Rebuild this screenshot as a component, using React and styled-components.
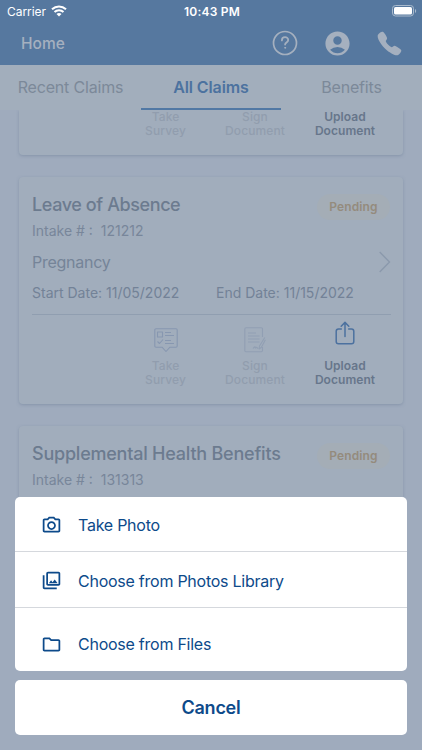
import styled, { createGlobalStyle } from 'styled-components';
import { MdAccountCircle, MdOutlinePhotoCamera, MdOutlinePhotoLibrary, MdOutlineFolder } from 'react-icons/md'
import { IoCall } from 'react-icons/io5'

const GlobalStyle = createGlobalStyle`
    * { box-sizing : border-box; }
    body {
        margin : 0;
        font-family : Inter, 'Liberation Sans', sans-serif;
    }
    svg { display : block; }
`

const Screen = styled.div`
    position : relative;
    width : 422px;
    height : 750px;
    overflow : hidden;
    display : flex;
    flex-direction : column;
    background : #9fabbd;
`

const TopBar = styled.header`
    flex : none;
    height : 65px;
    background : #56789f;
`

const StatusBar = styled.div`
    display : grid;
    grid-template-columns : 1fr auto 1fr;
    align-items : center;
    height : 22px;
    padding : 0 5px 0 7px;
    color : #fff;
    font-size : 12px;
`

const Carrier = styled.div`
    display : flex;
    align-items : center;
    gap : 5px;
    letter-spacing : -0.05px;
`

const Clock = styled.div`
    font-weight : 600;
    font-size : 12px;
    letter-spacing : 0.2px;
`

const Battery = styled.div`
    justify-self : end;
`

const NavBar = styled.div`
    display : flex;
    align-items : center;
    height : 42px;
    padding : 0 19px 0 21px;
    color : #a5b0bf;
`

const HomeLink = styled.div`
    flex : 1;
    font-size : 15.5px;
    font-weight : 500;
`

const NavIcons = styled.div`
    display : flex;
    align-items : center;
    gap : 24.5px;
`

const Tabs = styled.nav`
    flex : none;
    display : grid;
    grid-template-columns : 141px 140px 141px;
    height : 45px;
    background : #a2aebc;
`

const Tab = styled.div`
    display : flex;
    align-items : center;
    justify-content : center;
    padding-top : 1px;
    border-bottom : 2px solid ${p => p.$active ? '#5178a4' : 'transparent'};
    color : ${p => p.$active ? '#4c729f' : '#7c8999'};
    font-size : 16px;
    font-weight : ${p => p.$active ? 600 : 400};
    letter-spacing : ${p => p.$active ? '-0.1px' : '-0.18px'};
`

const List = styled.main`
    flex : 1;
    display : flex;
    flex-direction : column;
    gap : 22px;
    padding : 0 19px;
    overflow : hidden;
`

const Card = styled.section`
    flex : none;
    height : ${p => p.$tail ? '45px' : '227px'};
    padding : ${p => p.$tail ? '0 13px 0 12px' : '17px 12px 0 13px'};
    border-radius : ${p => p.$tail ? '0 0 4px 4px' : '4px'};
    background : #a1adbc;
    box-shadow : 0 1px 3px rgba(110, 128, 153, 0.5);
`

const CardHead = styled.div`
    display : flex;
    justify-content : space-between;
    height : 27px;
`

const Title = styled.h2`
    margin : 0;
    line-height : 22px;
    font-size : 18px;
    font-weight : 500;
    color : #6c7b8f;
    letter-spacing : ${p => p.$spacing || '0'};
`

const Badge = styled.span`
    width : 73px;
    height : 26px;
    margin-right : 1px;
    border-radius : 13px;
    background : #a4adb6;
    color : #948b7d;
    font-size : 12px;
    font-weight : 600;
    letter-spacing : 0.1px;
    line-height : 26px;
    text-align : center;
`

const Intake = styled.div`
    height : 19px;
    line-height : 19px;
    font-size : 14px;
    color : #78869a;
    white-space : pre;
`

const Kind = styled.div`
    display : flex;
    align-items : center;
    justify-content : space-between;
    height : 44px;
    font-size : 16px;
    color : #758498;
    letter-spacing : -0.25px;
`

const Dates = styled.div`
    display : grid;
    grid-template-columns : 184px 1fr;
    height : 31px;
    border-bottom : 1px solid #909eb0;
    line-height : 18px;
    font-size : 14px;
    color : #738297;
`

const Actions = styled.div`
    display : grid;
    grid-template-columns : 89px 90px 90px;
    justify-content : end;
    padding-right : ${p => p.$inset ? '1px' : '0'};
`

const Action = styled.div`
    display : flex;
    flex-direction : column;
    align-items : center;
    color : ${p => p.$enabled ? '#67768b' : '#919dae'};
    font-size : 12px;
    font-weight : ${p => p.$enabled ? 600 : 500};
    line-height : 14px;
    text-align : center;
    letter-spacing : ${p => p.$enabled ? '0.05px' : '0.1px'};
`

const ActionIcon = styled.div`
    display : flex;
    align-items : center;
    height : 44px;
    padding-top : ${p => p.$up ? '0' : '6px'};
    padding-bottom : ${p => p.$up ? '7px' : '0'};
`

const Sheet = styled.div`
    position : absolute;
    left : 15px;
    right : 15px;
    top : 497px;
    display : flex;
    flex-direction : column;
    gap : 8.5px;
    color : #0d4a8a;
`

const Options = styled.div`
    border-radius : 5px;
    background : #fff;
`

const Option = styled.div`
    display : flex;
    align-items : center;
    gap : 16px;
    height : ${p => p.$height}px;
    padding : ${p => p.$pad || '2px'} 0 0 26px;
    border-bottom : ${p => p.$last ? 'none' : '1px solid #d5d8dd'};
    font-size : 16px;
    letter-spacing : -0.25px;
`

const Cancel = styled.div`
    height : 55px;
    border-radius : 5px;
    background : #fff;
    font-size : 18px;
    font-weight : 600;
    line-height : 55px;
    letter-spacing : -0.25px;
    text-align : center;
`

function WifiIcon() {
    return (
        <svg width="16" height="12" viewBox="0 0 16 12" fill="none" stroke="#fff" strokeWidth="2">
            <path d="M1 4.3C5 .5 11 .5 15 4.3" />
            <path d="M3.5 7C6 4.6 10 4.6 12.5 7" />
            <path d="M8 11.6 5.5 9C7 7.8 9 7.8 10.5 9Z" fill="#fff" stroke="none" />
        </svg>
    )
}

function BatteryIcon() {
    return (
        <svg width="25" height="12" viewBox="0 0 25 12">
            <rect x=".5" y=".5" width="21" height="10.5" rx="3" fill="none" stroke="#a9bacd" />
            <rect x="2" y="2" width="18" height="7.5" rx="1.6" fill="#fff" />
            <path d="M23 4v4c1.6-.6 1.6-3.4 0-4Z" fill="#a9bacd" />
        </svg>
    )
}

function HelpIcon() {
    return (
        <svg width="26" height="26" viewBox="0 0 26 26" fill="none" stroke="currentColor" strokeLinecap="round">
            <circle cx="13" cy="13" r="11.5" strokeWidth="1.7" />
            <path d="M9.9 10.4c0-4.200 6.300-4.200 6.300-.3 0 2.400-3.100 2.400-3.100 4.400" strokeWidth="1.800" />
            <circle cx="13.100" cy="17.800" r=".5" fill="currentColor" />
        </svg>
    )
}

function SurveyIcon() {
    return (
        <svg width="24" height="25" viewBox="0 0 24 25" fill="none" stroke="#8797b0" strokeWidth="1.1" strokeLinejoin="round">
            <path d="M2 .8h20q1.200 0 1.200 1.200v16q0 1.200-1.200 1.200h-6L12 23.500l-4-4.300H2Q.8 19.200 .8 18V2Q.8.8 2 .8Z" />
            <rect x="3.500" y="4" width="5" height="5" />
            <path d="M11 4.500h6M11 7.500h9M11 12.500h6M11 15.500h9M3.500 13.500l2 2 3.500-4" />
        </svg>
    )
}

function SignIcon() {
    return (
        <svg width="22" height="26" viewBox="0 0 22 26" fill="none" stroke="#919fb3" strokeWidth="1.1" strokeLinejoin="round">
            <path d="M18.500 10V2q0-1.200-1.200-1.200H2Q.8.8.8 2v21.500q0 1.200 1.200 1.200h15.300q1.200 0 1.200-1.200V20" />
            <path d="M4 6h8M4 9h11.500M4 12h11.500M4 15h11.500" />
            <path d="m20.800 10.500-5.300 8.500-.4 3 2.300-1.800 4-7.500M9 21.500q2.500-3 2.500-.5 1.500-1.500 2.500.8" />
        </svg>
    )
}

function ShareIcon() {
    return (
        <svg width="20" height="25" viewBox="0 0 20 25" fill="none" stroke="#4c719f" strokeWidth="1.5" strokeLinecap="round" strokeLinejoin="round">
            <path d="M6.300 8H3.500Q1.200 8 1.200 10.300v10.200q0 2.300 2.300 2.300h13q2.300 0 2.300-2.300V10.300Q18.800 8 16.500 8h-2.800" />
            <path d="M10 15.500V1.500M6.200 5.200 10 1.400l3.800 3.800" />
        </svg>
    )
}

function ChevronIcon() {
    return (
        <svg width="12" height="22" viewBox="0 0 12 22" fill="none" stroke="#8b99ac" strokeWidth="1.4">
            <path d="m.7 1 9.800 10-9.800 10" />
        </svg>
    )
}

function ClaimActions({ icons }) {
    return (
        <Actions $inset={icons}>
            <Action>
                {icons && <ActionIcon><SurveyIcon /></ActionIcon>}
                Take<br />Survey
            </Action>
            <Action>
                {icons && <ActionIcon><SignIcon /></ActionIcon>}
                Sign<br />Document
            </Action>
            <Action $enabled>
                {icons && <ActionIcon $up><ShareIcon /></ActionIcon>}
                Upload<br />Document
            </Action>
        </Actions>
    )
}

function App() {

    return (
        <>
            <GlobalStyle />
            <Screen>
                <TopBar>
                    <StatusBar>
                        <Carrier>Carrier <WifiIcon /></Carrier>
                        <Clock>10:43 PM</Clock>
                        <Battery><BatteryIcon /></Battery>
                    </StatusBar>
                    <NavBar>
                        <HomeLink>Home</HomeLink>
                        <NavIcons>
                            <HelpIcon />
                            <MdAccountCircle size={29} />
                            <IoCall size={27} />
                        </NavIcons>
                    </NavBar>
                </TopBar>
                <Tabs>
                    <Tab>Recent Claims</Tab>
                    <Tab $active>All Claims</Tab>
                    <Tab>Benefits</Tab>
                </Tabs>
                <List>
                    <Card $tail>
                        <ClaimActions />
                    </Card>
                    <Card>
                        <CardHead>
                            <Title $spacing="-0.4px">Leave of Absence</Title>
                            <Badge>Pending</Badge>
                        </CardHead>
                        <Intake>Intake # :  121212</Intake>
                        <Kind>Pregnancy <ChevronIcon /></Kind>
                        <Dates>
                            <span>Start Date: 11/05/2022</span>
                            <span>End Date: 11/15/2022</span>
                        </Dates>
                        <ClaimActions icons />
                    </Card>
                    <Card>
                        <CardHead>
                            <Title $spacing="-0.22px">Supplemental Health Benefits</Title>
                            <Badge>Pending</Badge>
                        </CardHead>
                        <Intake>Intake # :  131313</Intake>
                    </Card>
                </List>
                <Sheet>
                    <Options>
                        <Option $height={55}><MdOutlinePhotoCamera size={21} /> Take Photo</Option>
                        <Option $height={56}><MdOutlinePhotoLibrary size={21} /> Choose from Photos Library</Option>
                        <Option $height={63} $pad="9px" $last><MdOutlineFolder size={21} /> Choose from Files</Option>
                    </Options>
                    <Cancel>Cancel</Cancel>
                </Sheet>
            </Screen>
        </>
    )
}

export default App
